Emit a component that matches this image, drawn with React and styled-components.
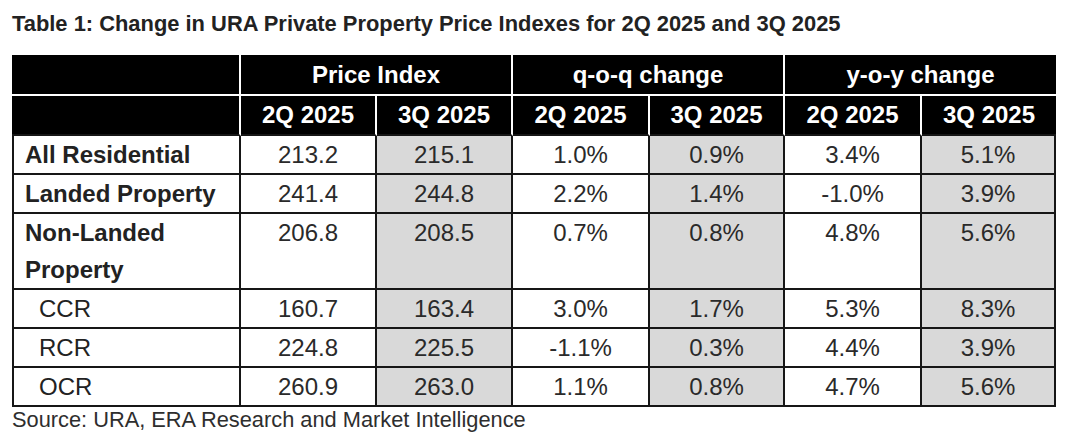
import React from "react";
import styled, { createGlobalStyle } from "styled-components";

const GlobalStyle = createGlobalStyle`
  html, body {
    margin: 0;
    padding: 0;
    background: #ffffff;
  }
  body {
    font-family: "Liberation Sans", Arial, sans-serif;
  }
`;

const Page = styled.div`
  width: 1080px;
  height: 448px;
  box-sizing: border-box;
  padding: 11px 0 0 12px;
  background: #ffffff;
  overflow: hidden;
`;

const Title = styled.h1`
  margin: 0 0 19px 0;
  font-size: 21.9px;
  line-height: 25px;
  font-weight: 700;
  color: #222222;
`;

const Grid = styled.div`
  display: grid;
  width: 1044px;
  grid-template-columns: 229px 136px 136px 137px 135px 137px 134px;
`;

const HeadCell = styled.div`
  grid-column: span ${(p) => p.$span || 1};
  box-sizing: border-box;
  background: #000000;
  color: #ffffff;
  font-size: 24px;
  font-weight: 700;
  text-align: center;
  white-space: nowrap;
  line-height: ${(p) => (p.$top ? "39px" : "38px")};
  border-right: ${(p) => (p.$last ? "none" : "2px solid #ffffff")};
  border-bottom: 2px solid ${(p) => (p.$top ? "#ffffff" : "#161616")};
`;

const Cell = styled.div`
  box-sizing: border-box;
  background: ${(p) => (p.$shaded ? "#d9d9d9" : "#ffffff")};
  color: #2a2a2a;
  font-size: 24px;
  line-height: 37px;
  text-align: center;
  white-space: nowrap;
  border-right: 2px solid #161616;
  border-bottom: 2px solid #161616;
`;

const LabelCell = styled.div`
  box-sizing: border-box;
  background: #ffffff;
  color: #222222;
  font-size: 24px;
  line-height: 37px;
  font-weight: ${(p) => (p.$sub ? 400 : 700)};
  padding-left: ${(p) => (p.$sub ? "25px" : "11px")};
  border-left: 2px solid #161616;
  border-right: 2px solid #161616;
  border-bottom: 2px solid #161616;
`;

const Source = styled.p`
  margin: 0;
  font-size: 21.8px;
  line-height: 25px;
  color: #2e2e2e;
`;

const rows = [
  { label: "All Residential", values: ["213.2", "215.1", "1.0%", "0.9%", "3.4%", "5.1%"] },
  { label: "Landed Property", values: ["241.4", "244.8", "2.2%", "1.4%", "-1.0%", "3.9%"] },
  { label: ["Non-Landed", "Property"], values: ["206.8", "208.5", "0.7%", "0.8%", "4.8%", "5.6%"] },
  { label: "CCR", sub: true, values: ["160.7", "163.4", "3.0%", "1.7%", "5.3%", "8.3%"] },
  { label: "RCR", sub: true, values: ["224.8", "225.5", "-1.1%", "0.3%", "4.4%", "3.9%"] },
  { label: "OCR", sub: true, values: ["260.9", "263.0", "1.1%", "0.8%", "4.7%", "5.6%"] },
];

const groups = ["Price Index", "q-o-q change", "y-o-y change"];
const quarters = ["2Q 2025", "3Q 2025", "2Q 2025", "3Q 2025", "2Q 2025", "3Q 2025"];

export default function App() {
  return (
    <>
      <GlobalStyle />
      <Page>
        <Title>Table 1: Change in URA Private Property Price Indexes for 2Q 2025 and 3Q 2025</Title>
        <Grid>
          <HeadCell $top />
          {groups.map((g, i) => (
            <HeadCell key={g} $top $span={2} $last={i === groups.length - 1}>
              {g}
            </HeadCell>
          ))}
          <HeadCell />
          {quarters.map((q, i) => (
            <HeadCell key={i} $last={i === quarters.length - 1}>
              {q}
            </HeadCell>
          ))}
          {rows.map((r, ri) => (
            <React.Fragment key={ri}>
              <LabelCell $sub={r.sub}>
                {Array.isArray(r.label)
                  ? r.label.map((l, li) => <div key={li}>{l}</div>)
                  : r.label}
              </LabelCell>
              {r.values.map((v, vi) => (
                <Cell key={vi} $shaded={vi % 2 === 1}>
                  {v}
                </Cell>
              ))}
            </React.Fragment>
          ))}
        </Grid>
        <Source>Source: URA, ERA Research and Market Intelligence</Source>
      </Page>
    </>
  );
}
